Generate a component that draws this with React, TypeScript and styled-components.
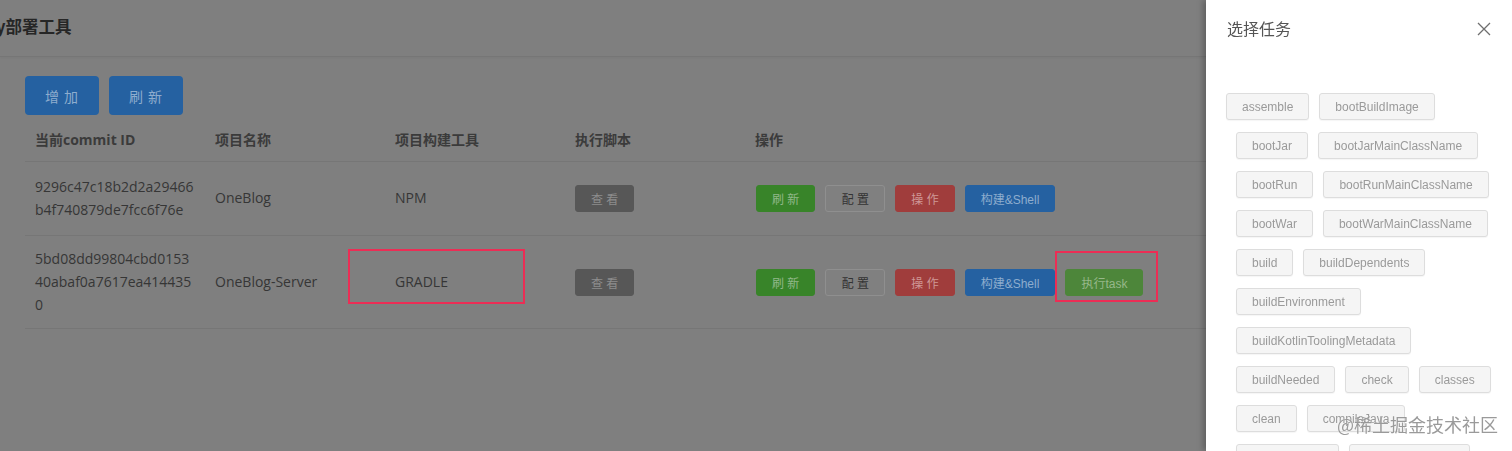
import * as React from 'react';
import styled, { createGlobalStyle } from 'styled-components';

interface Project {
  commit: string;
  name: string;
  tool: string;
  task: boolean;
}

const projects: Project[] = [
  { commit: '9296c47c18b2d2a29466b4f740879de7fcc6f76e', name: 'OneBlog', tool: 'NPM', task: false },
  { commit: '5bd08dd99804cbd015340abaf0a7617ea4144350', name: 'OneBlog-Server', tool: 'GRADLE', task: true },
];

const tasks = [
  'assemble',
  'bootBuildImage',
  'bootJar',
  'bootJarMainClassName',
  'bootRun',
  'bootRunMainClassName',
  'bootWar',
  'bootWarMainClassName',
  'build',
  'buildDependents',
  'buildEnvironment',
  'buildKotlinToolingMetadata',
  'buildNeeded',
  'check',
  'classes',
  'clean',
  'compileJava',
  'compileKotlin',
  'compileTestJava',
];

const GlobalStyle = createGlobalStyle`
  body {
    margin: 0;
    background: #7f7f7f;
    overflow: hidden;
    font-family: "Open Sans", "Noto Sans CJK SC", sans-serif;
  }
`;

const App: React.FC = () => {
  return (
    <>
      <GlobalStyle />
      <Page>
        <Header>
          <Title>y部署工具</Title>
        </Header>
        <Content>
          <Toolbar>
            <MainButton>增 加</MainButton>
            <MainButton>刷 新</MainButton>
          </Toolbar>
          <Table>
            <colgroup>
              <col style={{ width: 180 }} />
              <col style={{ width: 180 }} />
              <col style={{ width: 180 }} />
              <col style={{ width: 180 }} />
              <col />
            </colgroup>
            <thead>
              <tr>
                <Th>当前commit ID</Th>
                <Th>项目名称</Th>
                <Th>项目构建工具</Th>
                <Th>执行脚本</Th>
                <Th>操作</Th>
              </tr>
            </thead>
            <tbody>
              {projects.map((p) => (
                <tr key={p.commit}>
                  <Td className="commit">{p.commit}</Td>
                  <Td>{p.name}</Td>
                  <Td>
                    {p.task && <Highlight left={-37} top={-33} width={177} height={55} />}
                    {p.tool}
                  </Td>
                  <Td>
                    <RowButton kind="dark">查 看</RowButton>
                  </Td>
                  <Td>
                    <Actions>
                      <RowButton kind="green">刷 新</RowButton>
                      <RowButton kind="plain">配 置</RowButton>
                      <RowButton kind="red">操 作</RowButton>
                      <RowButton kind="blue">构建&amp;Shell</RowButton>
                      {p.task && (
                        <Marked>
                          <RowButton kind="olive">执行task</RowButton>
                          <Highlight left={-10} top={-18} width={103} height={51} />
                        </Marked>
                      )}
                    </Actions>
                  </Td>
                </tr>
              ))}
            </tbody>
          </Table>
        </Content>
      </Page>

      <Drawer>
        <DrawerHeader>
          <DrawerTitle>选择任务</DrawerTitle>
          <Close>
            <svg width="14" height="14" viewBox="0 0 14 14">
              <path d="M1 1 L13 13 M13 1 L1 13" stroke="#6f6f6f" strokeWidth="1.3" fill="none" />
            </svg>
          </Close>
        </DrawerHeader>
        <TagList>
          {tasks.map((t) => (
            <Tag key={t}>{t}</Tag>
          ))}
        </TagList>
        <Watermark>@稀土掘金技术社区</Watermark>
      </Drawer>
    </>
  );
};

const Page = styled.div`
  width: 1512px;
  height: 451px;
  overflow: hidden;
`;

const Header = styled.header`
  height: 56px;
  display: flex;
  align-items: center;
  border-bottom: 1px solid #767676;
  box-shadow: 0 1px 2px rgba(0, 0, 0, 0.04);
`;

const Title = styled.h1`
  margin: 0 0 4px -4px;
  font-family: "Noto Sans CJK SC", sans-serif;
  font-size: 16.5px;
  font-weight: 700;
  color: #262626;
`;

const Content = styled.div`
  padding: 19px 25px 0;
`;

const Toolbar = styled.div`
  display: flex;
  gap: 10px;
`;

const MainButton = styled.button`
  width: 74px;
  height: 39px;
  border: none;
  border-radius: 4px;
  background: #2561a1;
  color: #8eadce;
  font-family: "Noto Sans CJK SC", sans-serif;
  font-size: 14px;
  letter-spacing: 1px;
  padding: 0;
`;

const Table = styled.table`
  margin-top: 5px;
  width: 1462px;
  border-collapse: collapse;
  table-layout: fixed;
`;

const Th = styled.th`
  text-align: left;
  padding: 8px 10px 11px;
  height: 22px;
  font-family: "Open Sans", "Noto Sans CJK SC", sans-serif;
  font-size: 14px;
  font-weight: 700;
  color: #3b3b3b;
  border-bottom: 1px solid #767676;
`;

const Td = styled.td`
  position: relative;
  box-sizing: border-box;
  height: 74px;
  padding: 12px 10px;
  font-size: 14px;
  line-height: 22.8px;
  color: #363636;
  vertical-align: middle;
  border-bottom: 1px solid #767676;

  &.commit {
    word-break: break-all;
  }
`;

const Actions = styled.div`
  display: flex;
  gap: 10px;
  align-items: center;
  padding-left: 1px;

  & > button:nth-child(2) {
    width: 60px;
  }
`;

const Marked = styled.span`
  position: relative;
  display: inline-flex;
`;

interface HighlightProps {
  left: number;
  top: number;
  width: number;
  height: number;
}

const Highlight = styled.span<HighlightProps>`
  position: absolute;
  left: ${({ left }) => left}px;
  top: ${({ top }) => (top < -20 ? `calc(50% + ${top}px)` : `${top}px`)};
  width: ${({ width }) => width}px;
  height: ${({ height }) => height}px;
  box-sizing: border-box;
  border: 2px solid #ec2d55;
  pointer-events: none;
`;

type Kind = 'dark' | 'green' | 'plain' | 'red' | 'blue' | 'olive';

const kindColors: Record<Kind, { bg: string; fg: string; border: string }> = {
  dark: { bg: '#575757', fg: '#8d8d8d', border: '#575757' },
  green: { bg: '#388429', fg: '#92b889', border: '#388429' },
  plain: { bg: '#808080', fg: '#333333', border: '#8f8f8f' },
  red: { bg: '#a03d3c', fg: '#cf9897', border: '#a03d3c' },
  blue: { bg: '#2561a1', fg: '#8eadce', border: '#2561a1' },
  olive: { bg: '#4d863a', fg: '#97b88a', border: '#4d863a' },
};

const RowButton = styled.button<{ kind: Kind }>`
  height: 27px;
  padding: 0 15px;
  border-radius: 3px;
  border: 1px solid ${({ kind }) => kindColors[kind].border};
  background: ${({ kind }) => kindColors[kind].bg};
  color: ${({ kind }) => kindColors[kind].fg};
  font-family: "Liberation Sans", "Noto Sans CJK SC", sans-serif;
  font-size: 12px;
  white-space: nowrap;
`;

const Drawer = styled.aside`
  position: fixed;
  top: 0;
  right: 0;
  bottom: 0;
  width: 306px;
  background: #ffffff;
  box-shadow: -3px 0 6px rgba(0, 0, 0, 0.25);
  overflow: hidden;
`;

const DrawerHeader = styled.div`
  height: 58px;
  padding: 0 20px 0 21px;
  display: flex;
  align-items: center;
  justify-content: space-between;
`;

const DrawerTitle = styled.h2`
  margin: 0 0 2px;
  font-family: "Noto Sans CJK SC", sans-serif;
  font-size: 16px;
  font-weight: 400;
  color: #555555;
`;

const Close = styled.span`
  display: flex;
  margin-right: 1px;
`;

const TagList = styled.div`
  padding: 35px 20px 0;
  display: flex;
  flex-wrap: wrap;
  row-gap: 12px;
`;

const Tag = styled.span`
  height: 27px;
  box-sizing: border-box;
  padding: 0 15px;
  margin-left: 10px;
  display: inline-flex;
  align-items: center;
  background: #f5f5f5;
  border: 1px solid #dddddd;
  border-radius: 3px;
  box-shadow: 0 1px 1px rgba(0, 0, 0, 0.04);
  font-family: "Liberation Sans", Arial, sans-serif;
  font-size: 12px;
  color: #9a9a9a;

  &:first-child {
    margin-left: 0;
  }
`;

const Watermark = styled.div`
  position: absolute;
  left: 131px;
  top: 411px;
  white-space: nowrap;
  font-family: "Noto Sans CJK SC", sans-serif;
  font-size: 18px;
  color: rgba(120, 120, 120, 0.75);
  text-shadow: 0 0 1px #fff;
  pointer-events: none;
`;

export default App;
